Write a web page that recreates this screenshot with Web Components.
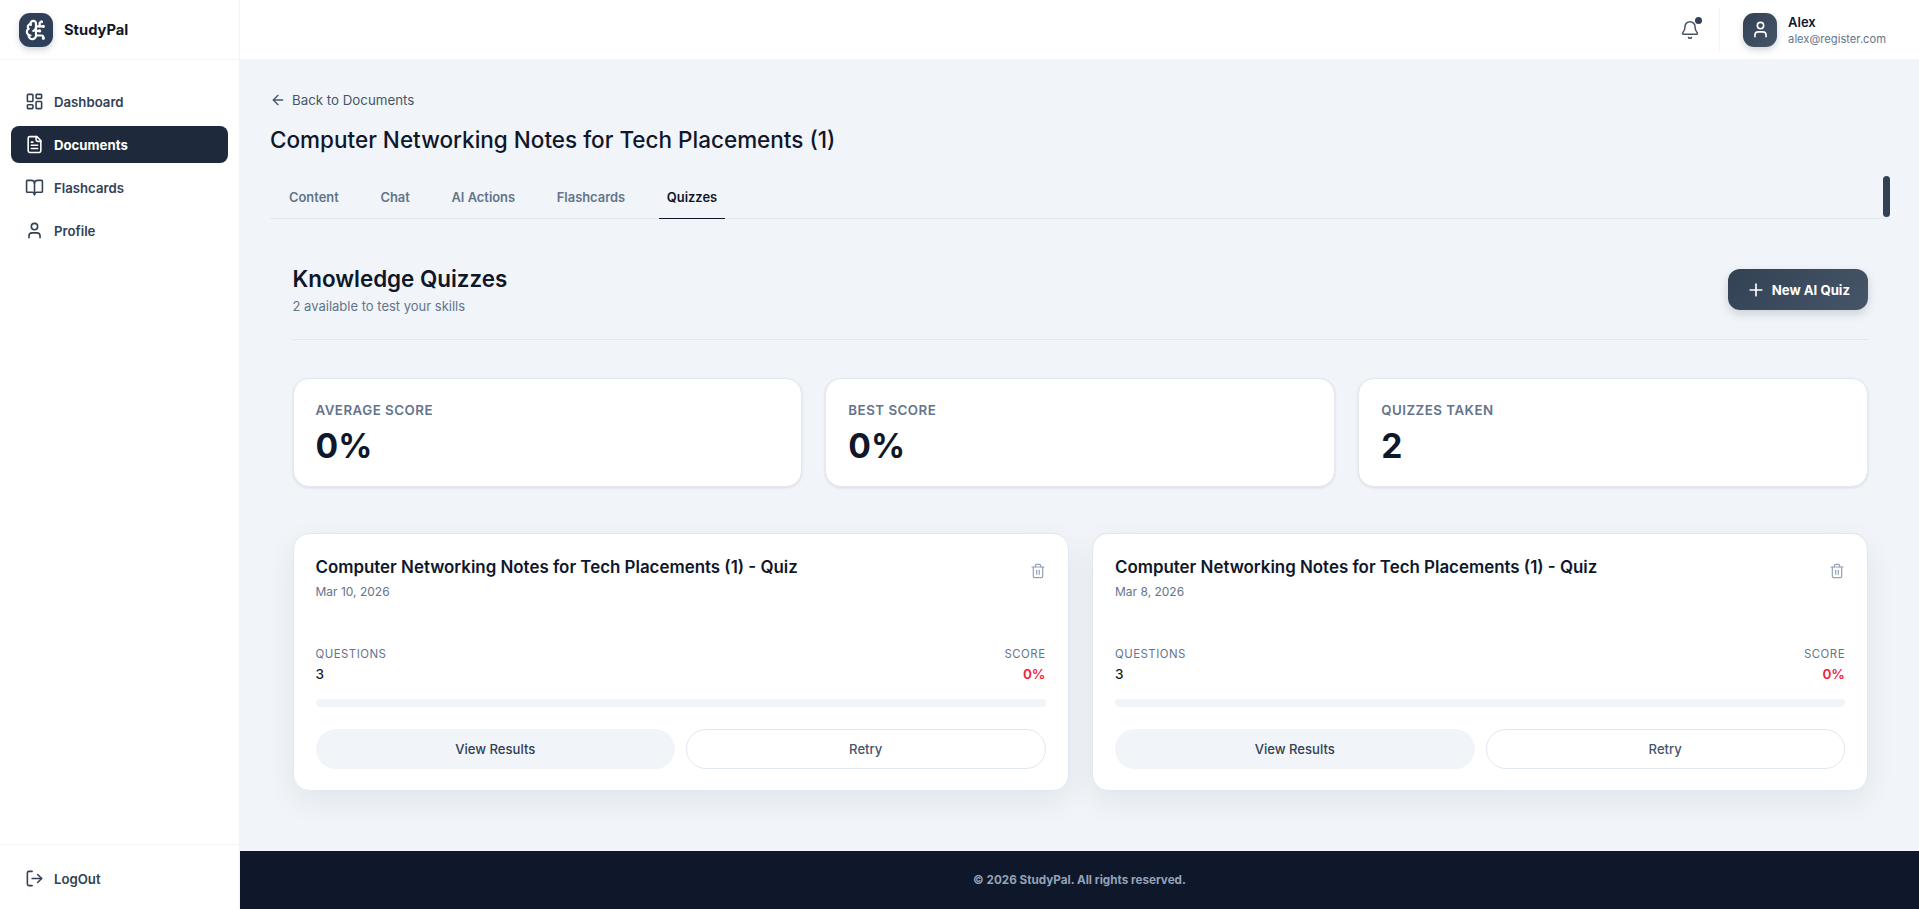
<!DOCTYPE html>
<html lang="en">
<head>
<meta charset="utf-8">
<title>StudyPal</title>
<style>
  html, body { margin: 0; height: 100%; background: #f1f5f9; }
  body { font-family: Inter, "Liberation Sans", sans-serif; color: #0f172a; overflow: hidden; }
</style>
</head>
<body>
<app-shell>
  <study-sidebar slot="sidebar"></study-sidebar>
  <top-bar slot="header" name="Alex" email="alex@register.com"></top-bar>
  <doc-heading title-text="Computer Networking Notes for Tech Placements (1)"></doc-heading>
  <doc-tabs active="Quizzes"></doc-tabs>
  <quiz-panel></quiz-panel>
  <app-footer slot="footer">© 2026 StudyPal. All rights reserved.</app-footer>
</app-shell>

<script>
// lucide outlines used around the app
const ICONS = {
  brain: '<path d="M12 5a3 3 0 1 0-5.997.125 4 4 0 0 0-2.526 5.77 4 4 0 0 0 .556 6.588A4 4 0 1 0 12 18Z"/><path d="M9 13a4.5 4.5 0 0 0 3-4"/><path d="M6.003 5.125A3 3 0 0 0 6.401 6.5"/><path d="M3.477 10.896a4 4 0 0 1 .585-.396"/><path d="M6 18a4 4 0 0 1-1.967-.516"/><path d="M12 13h4"/><path d="M12 18h6a2 2 0 0 1 2 2v1"/><path d="M12 8h8"/><path d="M16 8V5a2 2 0 0 1 2-2"/><circle cx="16" cy="13" r=".5"/><circle cx="18" cy="3" r=".5"/><circle cx="20" cy="21" r=".5"/><circle cx="20" cy="8" r=".5"/>',
  dashboard: '<rect width="7" height="9" x="3" y="3" rx="1"/><rect width="7" height="5" x="14" y="3" rx="1"/><rect width="7" height="9" x="14" y="12" rx="1"/><rect width="7" height="5" x="3" y="16" rx="1"/>',
  file: '<path d="M15 2H6a2 2 0 0 0-2 2v16a2 2 0 0 0 2 2h12a2 2 0 0 0 2-2V7Z"/><path d="M14 2v4a2 2 0 0 0 2 2h4"/><path d="M10 9H8"/><path d="M16 13H8"/><path d="M16 17H8"/>',
  book: '<path d="M12 7v14"/><path d="M3 18a1 1 0 0 1-1-1V4a1 1 0 0 1 1-1h5a4 4 0 0 1 4 4 4 4 0 0 1 4-4h5a1 1 0 0 1 1 1v13a1 1 0 0 1-1 1h-6a3 3 0 0 0-3 3 3 3 0 0 0-3-3z"/>',
  user: '<path d="M19 21v-2a4 4 0 0 0-4-4H9a4 4 0 0 0-4 4v2"/><circle cx="12" cy="7" r="4"/>',
  logout: '<path d="m16 17 5-5-5-5"/><path d="M21 12H9"/><path d="M9 21H5a2 2 0 0 1-2-2V5a2 2 0 0 1 2-2h4"/>',
  bell: '<path d="M10.268 21a2 2 0 0 0 3.464 0"/><path d="M3.262 15.326A1 1 0 0 0 4 17h16a1 1 0 0 0 .74-1.673C19.41 13.956 18 12.499 18 8A6 6 0 0 0 6 8c0 4.499-1.411 5.956-2.738 7.326"/>',
  back: '<path d="m12 19-7-7 7-7"/><path d="M19 12H5"/>',
  plus: '<path d="M5 12h14"/><path d="M12 5v14"/>',
  trash: '<path d="M3 6h18"/><path d="M19 6v14c0 1-1 2-2 2H7c-1 0-2-1-2-2V6"/><path d="M8 6V4c0-1 1-2 2-2h4c1 0 2 1 2 2v2"/><line x1="10" x2="10" y1="11" y2="17"/><line x1="14" x2="14" y1="11" y2="17"/>'
};

class UiIcon extends HTMLElement {
  connectedCallback() {
    const size = this.getAttribute('size') || 18;
    const weight = this.getAttribute('weight') || 2;
    this.attachShadow({ mode: 'open' });
    this.shadowRoot.innerHTML = `
      <style>
        :host { display: inline-flex; flex: none; line-height: 0; }
      </style>
      <svg width="${size}" height="${size}" viewBox="0 0 24 24" fill="none" stroke="currentColor"
        stroke-width="${weight}" stroke-linecap="round" stroke-linejoin="round">${ICONS[this.getAttribute('name')]}</svg>
    `;
  }
}
customElements.define('ui-icon', UiIcon);

class AppShell extends HTMLElement {
  constructor() {
    super();
    this.attachShadow({ mode: 'open' });
    this.shadowRoot.innerHTML = `
      <style>
        :host { display: grid; grid-template-columns: 240px 1fr; height: 100vh; }
        .right { display: flex; flex-direction: column; min-width: 0; height: 100vh; }
        main { flex: 1; min-height: 0; padding: 30px 30px 0; box-sizing: border-box; }
      </style>
      <slot name="sidebar"></slot>
      <div class="right">
        <slot name="header"></slot>
        <main><slot></slot></main>
        <slot name="footer"></slot>
      </div>
    `;
  }
}
customElements.define('app-shell', AppShell);

class NavItem extends HTMLElement {
  connectedCallback() {
    this.attachShadow({ mode: 'open' });
    const active = this.hasAttribute('active');
    this.shadowRoot.innerHTML = `
      <style>
        :host { display: flex; }
        a {
          flex: 1; display: flex; align-items: center; gap: 10px; height: 37px; padding: 0 14px;
          border-radius: 8px; font-size: 13.2px; font-weight: 600; color: #334155; text-decoration: none;
        }
        a.on { background: #1e293b; color: #fff; font-weight: 700; }
      </style>
      <a class="${active ? 'on' : ''}"><ui-icon name="${this.getAttribute('icon')}" size="19"></ui-icon><slot></slot></a>
    `;
  }
}
customElements.define('nav-item', NavItem);

class StudySidebar extends HTMLElement {
  constructor() {
    super();
    this.attachShadow({ mode: 'open' });
    this.shadowRoot.innerHTML = `
      <style>
        :host {
          display: flex; flex-direction: column; height: 100vh; box-sizing: border-box;
          background: #fff; border-right: 1px solid #f1f5f9;
        }
        .brand {
          height: 60px; box-sizing: border-box; display: flex; align-items: center; gap: 11px; padding: 0 19px;
          border-bottom: 1px solid #f1f5f9;
        }
        .logo {
          width: 34px; height: 34px; border-radius: 11px; color: #fff; display: grid; place-items: center;
          background: linear-gradient(135deg, #334155, #2c3e5a); box-shadow: 0 3px 6px rgba(51, 65, 85, .22);
        }
        .name { font-size: 14.7px; font-weight: 700; color: #0f172a; }
        nav { flex: 1; display: flex; flex-direction: column; gap: 6px; padding: 23px 11px 0; }
        .bottom { border-top: 1px solid #f1f5f9; padding: 15px 11px; height: 65px; box-sizing: border-box; }
      </style>
      <div class="brand">
        <div class="logo"><ui-icon name="brain" size="22" weight="2.4"></ui-icon></div>
        <span class="name">StudyPal</span>
      </div>
      <nav>
        <nav-item icon="dashboard">Dashboard</nav-item>
        <nav-item icon="file" active>Documents</nav-item>
        <nav-item icon="book">Flashcards</nav-item>
        <nav-item icon="user">Profile</nav-item>
      </nav>
      <div class="bottom"><nav-item icon="logout">LogOut</nav-item></div>
    `;
  }
}
customElements.define('study-sidebar', StudySidebar);

class TopBar extends HTMLElement {
  connectedCallback() {
    this.attachShadow({ mode: 'open' });
    this.shadowRoot.innerHTML = `
      <style>
        :host {
          display: flex; align-items: center; justify-content: flex-end; height: 60px; flex: none;
          box-sizing: border-box; background: #fff; border-bottom: 1px solid #f1f5f9; padding-right: 33px;
        }
        .bell { position: relative; display: flex; color: #475569; margin-right: 19px; }
        .dot { position: absolute; top: -3px; right: -2px; width: 7px; height: 7px; border-radius: 50%; background: #334155; }
        .sep { width: 1px; height: 45px; background: #f1f5f9; margin-right: 23px; }
        .avatar {
          width: 34px; height: 34px; border-radius: 11px; display: grid; place-items: center; color: #fff;
          background: linear-gradient(135deg, #334155, #475569); box-shadow: 0 3px 6px rgba(51, 65, 85, .22);
          margin-right: 11px;
        }
        .who { display: flex; flex-direction: column; gap: 1px; padding-top: 1px; }
        .n { font-size: 13px; line-height: 16px; font-weight: 600; color: #0f172a; }
        .e { font-size: 11.2px; line-height: 16px; color: #64748b; }
      </style>
      <div class="bell"><ui-icon name="bell" size="20" weight="1.8"></ui-icon><span class="dot"></span></div>
      <div class="sep"></div>
      <div class="avatar"><ui-icon name="user" size="19"></ui-icon></div>
      <div class="who">
        <span class="n">${this.getAttribute('name')}</span>
        <span class="e">${this.getAttribute('email')}</span>
      </div>
    `;
  }
}
customElements.define('top-bar', TopBar);

class DocHeading extends HTMLElement {
  connectedCallback() {
    this.attachShadow({ mode: 'open' });
    this.shadowRoot.innerHTML = `
      <style>
        :host { display: block; }
        a {
          display: flex; align-items: center; gap: 6px; height: 20px; font-size: 13.3px;
          color: #475569; text-decoration: none;
        }
        h1 { margin: 14px 0 0; font-size: 22.5px; line-height: 32px; font-weight: 500; color: #0f172a; }
      </style>
      <a><ui-icon name="back" size="16"></ui-icon>Back to Documents</a>
      <h1>${this.getAttribute('title-text')}</h1>
    `;
  }
}
customElements.define('doc-heading', DocHeading);

class DocTabs extends HTMLElement {
  connectedCallback() {
    this.attachShadow({ mode: 'open' });
    const active = this.getAttribute('active');
    const tabs = ['Content', 'Chat', 'AI Actions', 'Flashcards', 'Quizzes'];
    this.shadowRoot.innerHTML = `
      <style>
        :host {
          display: flex; gap: 25.7px; position: relative; margin-top: 20px; height: 43px; box-sizing: border-box;
          padding-left: 11px; border-bottom: 1px solid #e2e8f0;
        }
        span {
          display: flex; align-items: center; padding: 0 8px; font-size: 12.9px; font-weight: 600; color: #64748b;
          margin-bottom: -1px; border-bottom: 1.5px solid transparent;
        }
        span.on { color: #0f172a; border-bottom-color: #0f172a; }
        .thumb {
          position: absolute; right: -1px; top: 0; width: 7px; height: 41px; border-radius: 4px; background: #334155;
        }
      </style>
      ${tabs.map(t => `<span class="${t === active ? 'on' : ''}">${t}</span>`).join('')}
      <div class="thumb"></div>
    `;
  }
}
customElements.define('doc-tabs', DocTabs);

class StatCard extends HTMLElement {
  connectedCallback() {
    this.attachShadow({ mode: 'open' });
    this.shadowRoot.innerHTML = `
      <style>
        :host {
          display: block; height: 109px; box-sizing: border-box; padding: 21px 22px; background: #fff;
          border: 1px solid #e2e8f0; border-radius: 16px; box-shadow: 0 1px 3px rgba(15, 23, 42, .1);
        }
        .l { font-size: 13.3px; line-height: 20px; font-weight: 600; letter-spacing: .5px; color: #64748b; text-transform: uppercase; }
        .v { margin-top: 6px; font-size: 33.6px; line-height: 40px; font-weight: 700; color: #0f172a; }
      </style>
      <div class="l">${this.getAttribute('label')}</div>
      <div class="v">${this.getAttribute('value')}</div>
    `;
  }
}
customElements.define('stat-card', StatCard);

class QuizCard extends HTMLElement {
  connectedCallback() {
    this.attachShadow({ mode: 'open' });
    this.shadowRoot.innerHTML = `
      <style>
        :host {
          display: block; height: 258px; box-sizing: border-box; padding: 21px 22px; background: #fff;
          border: 1px solid #e2e8f0; border-radius: 16px; box-shadow: 0 10px 30px rgba(15, 23, 42, .07);
        }
        .top { display: flex; justify-content: space-between; }
        .t { font-size: 16.9px; line-height: 24px; font-weight: 600; color: #0f172a; }
        .d { margin-top: 4px; font-size: 12px; line-height: 18px; color: #64748b; }
        .trash { color: #94a3b8; margin: 8px 0 0; }
        .stats { display: flex; justify-content: space-between; margin-top: 45px; }
        .stats > div:last-child { text-align: right; }
        .k { font-size: 11.4px; line-height: 16px; letter-spacing: .5px; color: #64748b; text-transform: uppercase; }
        .n { margin-top: 2px; font-size: 13.6px; line-height: 20px; font-weight: 500; color: #0f172a; }
        .n.bad { color: #ef233c; font-weight: 600; }
        .bar { height: 8px; margin-top: 15px; border-radius: 4px; background: #f1f5f9; }
        .acts { display: grid; grid-template-columns: 1fr 1fr; gap: 11px; margin-top: 22px; }
        button {
          height: 40px; border-radius: 20px; font: 500 13.1px Inter, "Liberation Sans", sans-serif; color: #334155;
          background: #f1f5f9; border: 0; padding: 0;
        }
        button.line { background: #fff; border: 1px solid #e2e8f0; color: #475569; }
      </style>
      <div class="top">
        <div>
          <div class="t">${this.getAttribute('title-text')}</div>
          <div class="d">${this.getAttribute('date')}</div>
        </div>
        <ui-icon class="trash" name="trash" size="16" weight="1.8"></ui-icon>
      </div>
      <div class="stats">
        <div><div class="k">Questions</div><div class="n">${this.getAttribute('questions')}</div></div>
        <div><div class="k">Score</div><div class="n bad">${this.getAttribute('score')}</div></div>
      </div>
      <div class="bar"></div>
      <div class="acts"><button>View Results</button><button class="line">Retry</button></div>
    `;
  }
}
customElements.define('quiz-card', QuizCard);

class QuizPanel extends HTMLElement {
  constructor() {
    super();
    this.attachShadow({ mode: 'open' });
    const quizTitle = 'Computer Networking Notes for Tech Placements (1) - Quiz';
    this.shadowRoot.innerHTML = `
      <style>
        :host { display: block; padding: 44px 21px 0 22.5px; }
        .head {
          display: flex; justify-content: space-between; align-items: flex-start; height: 76px;
          border-bottom: 1px solid #e2e8f0;
        }
        h2 { margin: 0; font-size: 22.4px; line-height: 32px; font-weight: 600; color: #0f172a; }
        p { margin: 1px 0 0; font-size: 13px; line-height: 20px; color: #64748b; }
        button {
          display: flex; align-items: center; gap: 6px; margin-top: 6px; height: 41px; padding: 0 18px; border: 0;
          border-radius: 12px; background: linear-gradient(135deg, #334155, #475569); color: #fff;
          font: 700 13.2px Inter, "Liberation Sans", sans-serif; box-shadow: 0 4px 10px rgba(51, 65, 85, .2);
        }
        .stats { display: grid; grid-template-columns: repeat(3, 1fr); gap: 23px; margin-top: 38px; }
        .cards { display: grid; grid-template-columns: repeat(2, 1fr); gap: 23.5px; margin-top: 46px; }
      </style>
      <div class="head">
        <div><h2>Knowledge Quizzes</h2><p>2 available to test your skills</p></div>
        <button><ui-icon name="plus" size="20"></ui-icon>New AI Quiz</button>
      </div>
      <div class="stats">
        <stat-card label="Average Score" value="0%"></stat-card>
        <stat-card label="Best Score" value="0%"></stat-card>
        <stat-card label="Quizzes Taken" value="2"></stat-card>
      </div>
      <div class="cards">
        <quiz-card title-text="${quizTitle}" date="Mar 10, 2026" questions="3" score="0%"></quiz-card>
        <quiz-card title-text="${quizTitle}" date="Mar 8, 2026" questions="3" score="0%"></quiz-card>
      </div>
    `;
  }
}
customElements.define('quiz-panel', QuizPanel);

class AppFooter extends HTMLElement {
  constructor() {
    super();
    this.attachShadow({ mode: 'open' });
    this.shadowRoot.innerHTML = `
      <style>
        :host {
          display: flex; align-items: center; justify-content: center; height: 58px; flex: none;
          background: #0f172a; color: #94a3b8; font-size: 11.7px; font-weight: 700;
        }
      </style>
      <slot></slot>
    `;
  }
}
customElements.define('app-footer', AppFooter);
</script>
</body>
</html>
